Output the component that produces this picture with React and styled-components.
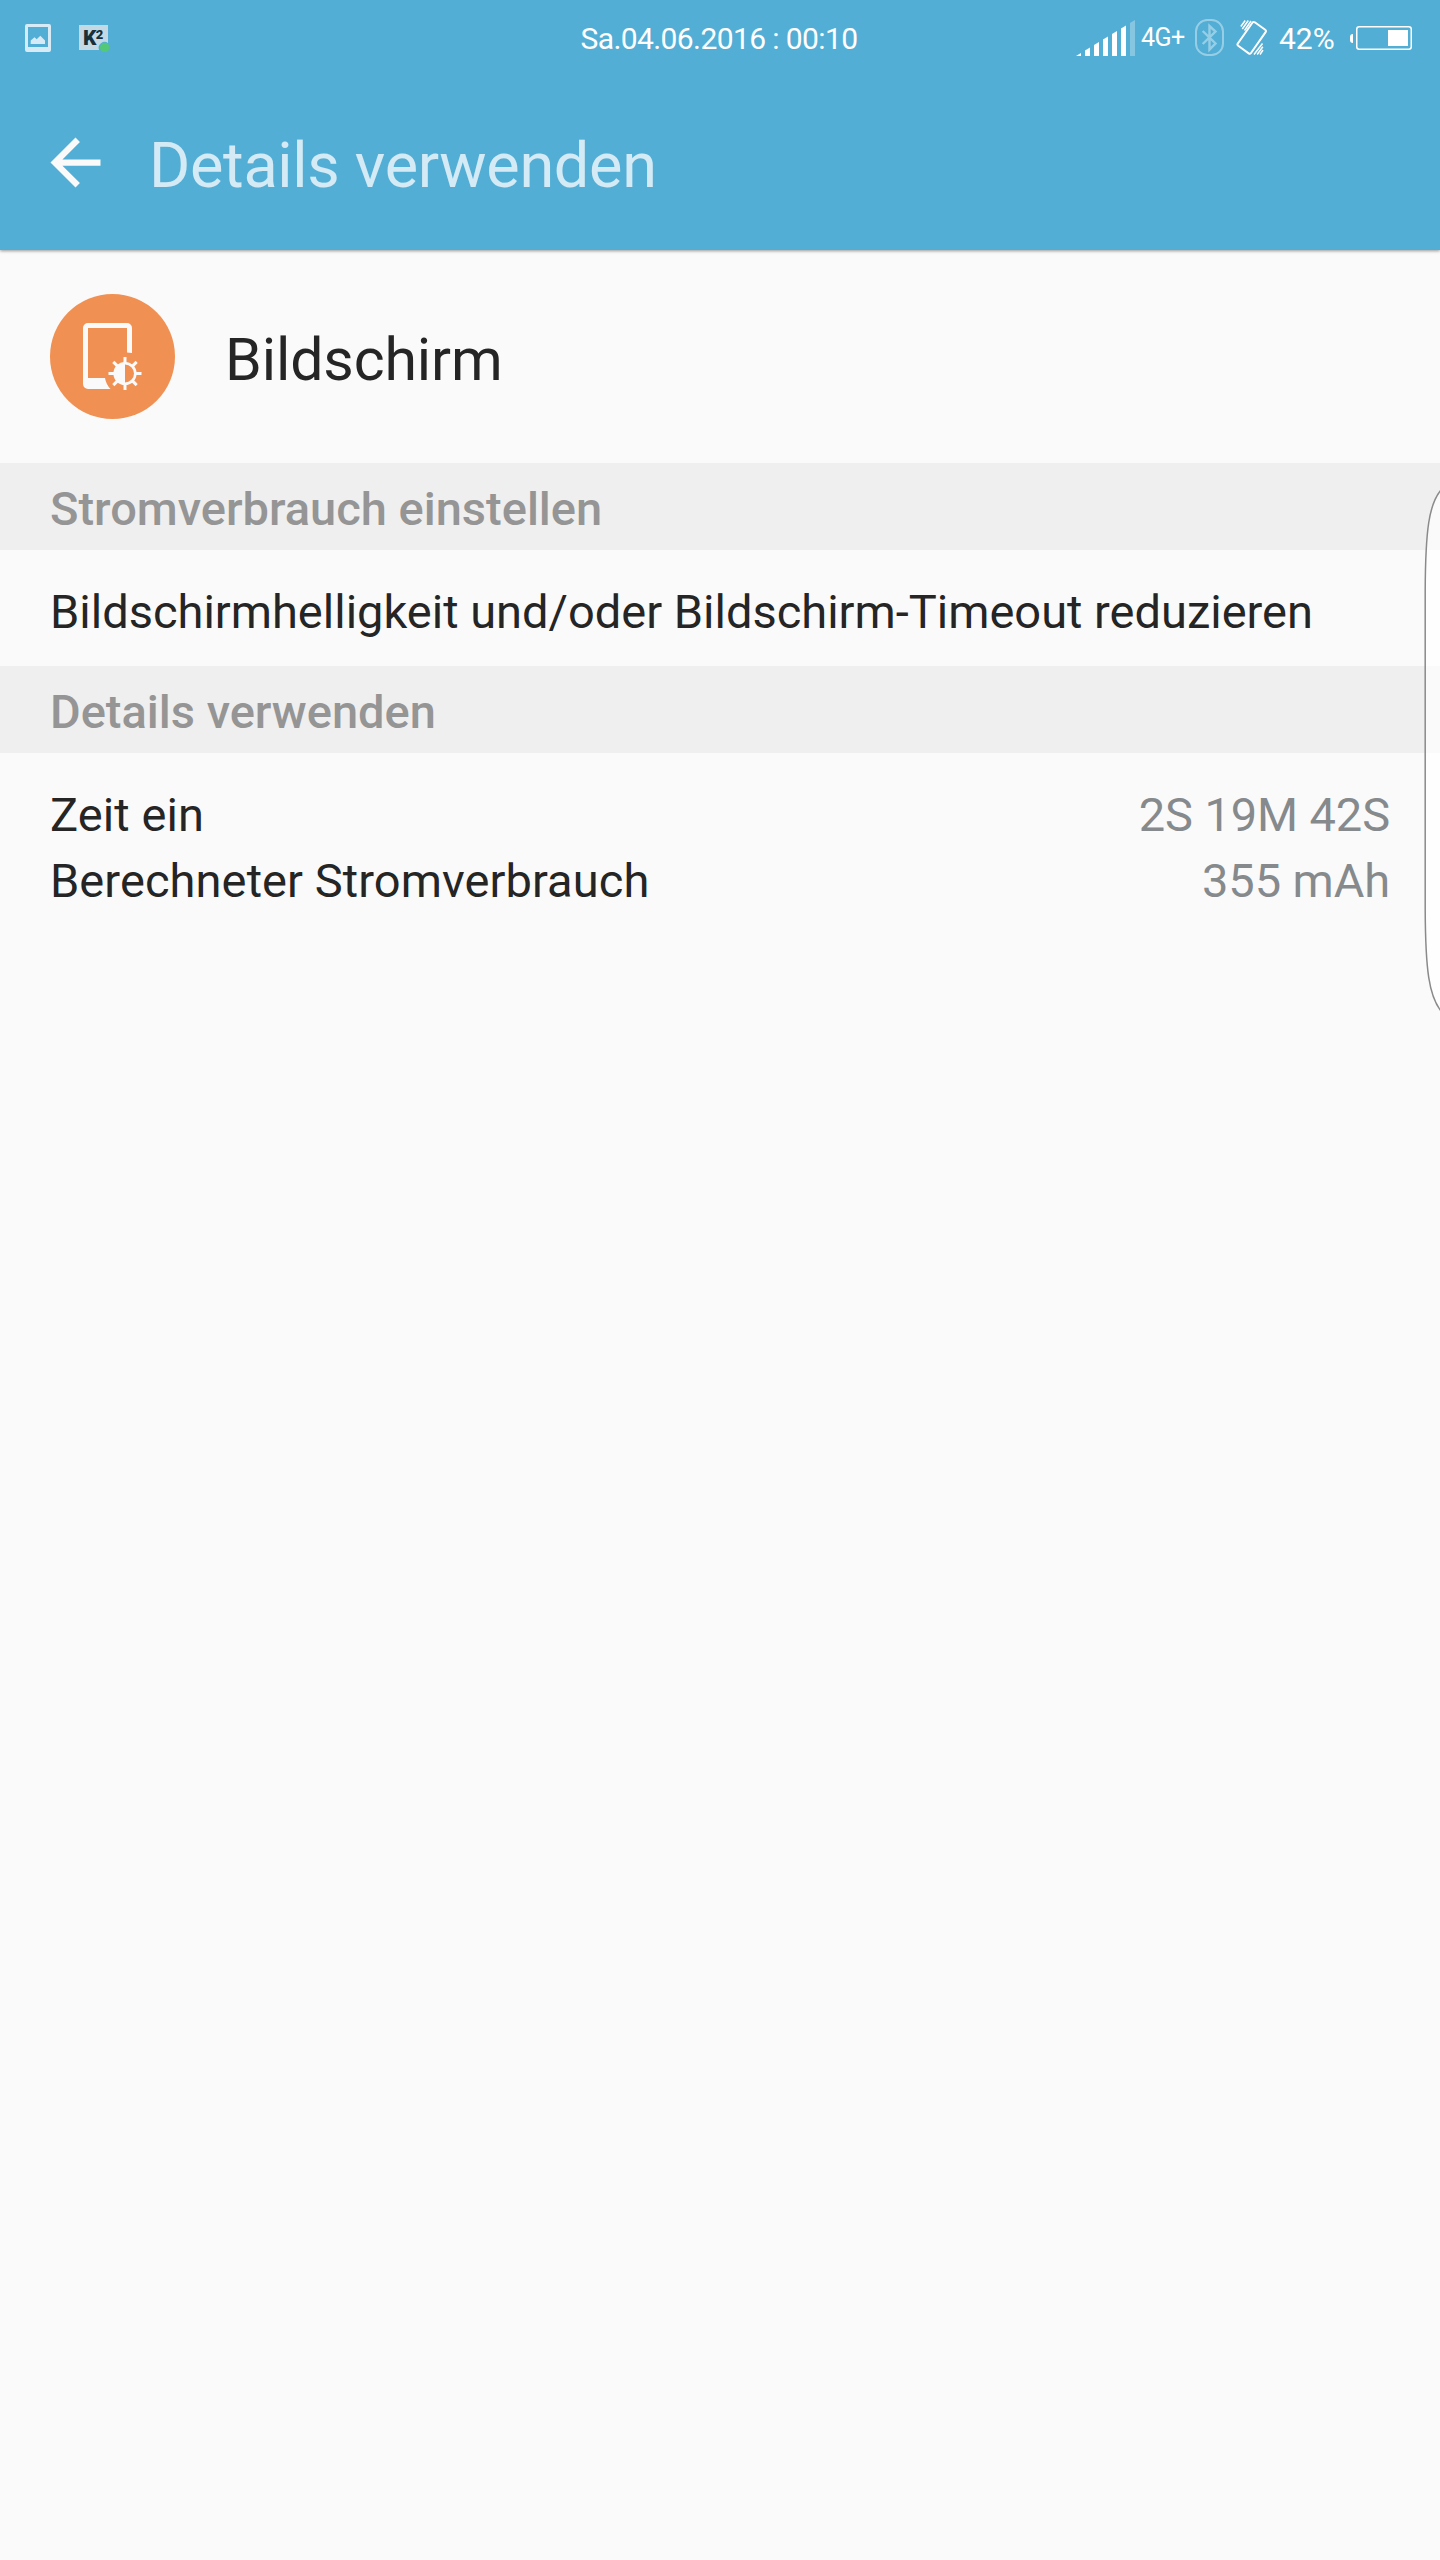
import React from "react";
import styled, { createGlobalStyle } from "styled-components";

const GlobalStyle = createGlobalStyle`
  body {
    margin: 0;
    background: #fafafa;
    font-family: Roboto, "Noto Sans", sans-serif;
  }
`;

// Styles
const Screen = styled.div`
  position: relative;
  width: 1440px;
  height: 2560px;
  overflow: hidden;
  background: #fafafa;
  color: #252525;
`;

const TopCon = styled.header`
  height: 250px;
  background: #53aed5;
  box-shadow: 0 1px 3px rgba(0, 0, 0, 0.4);
`;

const StatusBar = styled.div`
  display: grid;
  grid-template-columns: 1fr auto 1fr;
  align-items: center;
  height: 76px;
  padding: 0 28px 0 25px;
  color: #fff;
  font-size: 30px;
  line-height: 74px;
  white-space: nowrap;

  svg {
    display: block;
  }
`;

const StatusGroup = styled.div`
  display: flex;
  align-items: center;
  justify-content: ${({ $end }) => ($end ? "flex-end" : "flex-start")};
  gap: ${({ $gap }) => $gap || 0}px;
`;

const Clock = styled.span`
  padding: 2px 0 0 1px;
  letter-spacing: -0.6px;
`;

const Network = styled.span`
  width: 53px;
  margin-left: 6px;
  font-size: 25px;
  letter-spacing: -0.5px;
`;

const Percent = styled.span`
  width: 71px;
  margin-left: 11px;
  padding-top: 2px;
`;

const VibrateCon = styled.span`
  margin-left: 11px;
`;

const AppBar = styled.div`
  display: flex;
  align-items: center;
  height: 174px;
  padding-left: 38px;

  svg {
    margin-bottom: 1px;
  }

  h1 {
    margin: 0;
    padding: 5px 0 0 36px;
    font-size: 63px;
    font-weight: 400;
    letter-spacing: -0.32px;
    color: #d4eaf4;
  }
`;

const AppHeader = styled.div`
  display: flex;
  align-items: center;
  height: 213px;
  padding-left: 50px;

  h2 {
    margin: 0;
    padding: 5px 0 0 50px;
    font-size: 59px;
    font-weight: 400;
    letter-spacing: -0.1px;
  }
`;

const SectionTitle = styled.h3`
  height: 87px;
  margin: 0;
  padding: 2px 50px 0;
  box-sizing: border-box;
  background: #efefef;
  color: #959595;
  font-size: 47px;
  font-weight: 500;
  line-height: 87px;
`;

const Tip = styled.p`
  height: 116px;
  margin: 0;
  padding: 4px 50px 0;
  box-sizing: border-box;
  font-size: 47px;
  line-height: 116px;
  white-space: nowrap;
`;

const DetailList = styled.div`
  padding: 29px 50px 0;
`;

const DetailRow = styled.div`
  display: flex;
  justify-content: space-between;
  font-size: 47px;
  line-height: 66px;

  .label {
    letter-spacing: 0.08px;
  }

  .value {
    color: #868a8d;
    letter-spacing: -0.1px;
  }
`;

// Handle of the edge panel, lies over the right border of the screen
const EdgePanel = styled.svg`
  position: absolute;
  top: 480px;
  right: 0;
`;

const PictureIcon = () => (
  <svg width="26" height="28" viewBox="0 0 26 28">
    <path
      fill="#d6ebf5"
      fillRule="evenodd"
      d="M2 0h22a2 2 0 0 1 2 2v24a2 2 0 0 1-2 2H2a2 2 0 0 1-2-2V2a2 2 0 0 1 2-2zM3 3v20h20V3zM5.700 20v-3.500l3.800-3.200 2.200 2 3.600-3.500 4.700 4.700V20z"
    />
  </svg>
);

const K2Icon = () => (
  <svg width="31" height="28" viewBox="0 0 31 28">
    <path fill="#c3dae5" d="M0 1h29v18a6 6 0 0 0-9 7H0z" />
    <text x="4" y="21" fontSize="21" fontWeight="900" fill="#183039">K</text>
    <text x="16.700" y="14.500" fontSize="13" fontWeight="900" fill="#183039">2</text>
    <circle cx="25.700" cy="23.500" r="4.800" fill="#52c878" />
  </svg>
);

const SignalIcon = () => (
  <svg width="59" height="36" viewBox="0 0 59 36">
    {[0, 9, 18, 27, 36, 45, 54].map(x => (
      <path
        key={x}
        fill="#fff"
        opacity={x === 54 ? 0.3 : 1}
        d={`M${x} 36V${36 - x * 0.61}L${x + 5} ${36 - (x + 5) * 0.61}V36z`}
      />
    ))}
  </svg>
);

const BluetoothIcon = () => (
  <svg width="31" height="38" viewBox="0 0 31 38" fill="none" stroke="#fff" strokeWidth="2" opacity="0.4">
    <rect x="2" y="1" width="27" height="35" rx="11.500" />
    <path strokeWidth="2.400" d="M8.700 12l12.800 12.500-6 6V7l6 5.500L8.700 25" />
  </svg>
);

const VibrateIcon = () => (
  <svg width="32" height="36" viewBox="0 0 32 36" fill="none" stroke="#fff" strokeWidth="2">
    <path
      strokeLinejoin="round"
      d="M18.800 2.300l10.400 7.500q1.300 1 .4 2.300L15 33q-1 1.300-2.300.400L2.200 25.800q-1.300-1-.4-2.300L16.400 2.700q1-1.300 2.400-.4z"
    />
    <path strokeWidth="1.500" d="M4.800 6.500l4.400-6M6.300 9l6-8.500M8.500 10.500l6.500-9.500M26.500 23.500l-8.500 11M26.800 26.800l-5.600 7.700M27 30l-3 4.500" />
  </svg>
);

const BatteryIcon = () => (
  <svg width="62" height="24" viewBox="0 0 62 24">
    <path fill="#fff" d="M3 8v9a3 3 0 0 1-3-3v-3a3 3 0 0 1 3-3zM38 4h20v16H38z" />
    <rect x="6.750" y="0.750" width="54.500" height="22.500" rx="2.500" fill="none" stroke="#fff" strokeWidth="1.500" />
  </svg>
);

const BackIcon = () => (
  <svg width="75" height="75" viewBox="0 0 24 24" fill="#fafafa">
    <path d="M20 11H7.830l5.590-5.590L12 4l-8 8 8 8 1.410-1.410L7.830 13H20z" />
  </svg>
);

const DisplayIcon = () => (
  <svg width="125" height="125" viewBox="0 0 125 125">
    <circle cx="62.500" cy="62.500" r="62.500" fill="#f09052" />
    <path
      fill="#fafafa"
      d="M82 59V34a5 5 0 0 0-5-5H38a5 5 0 0 0-5 5v56a5 5 0 0 0 5 5h22.500a21 21 0 0 1-5.500-11H38V34h39v24.500q2.500 0 5 .500z"
    />
    <g transform="translate(75 79.500)" stroke="#fafafa" fill="none">
      <circle r="10.300" strokeWidth="2.600" />
      <path d="M0-10a10 10 0 0 0 0 20z" fill="#fafafa" stroke="none" />
      {[0, 45, 90, 135, 180, 225, 270, 315].map(a => (
        <path key={a} strokeWidth="3" d="M0-16.500v6" transform={`rotate(${a})`} />
      ))}
    </g>
  </svg>
);

const details = [
  { label: "Zeit ein", value: "2S 19M 42S" },
  { label: "Berechneter Stromverbrauch", value: "355 mAh" },
];

const App = () => {
  return (
    <Screen>
      <GlobalStyle />
      <TopCon>
        <StatusBar>
          <StatusGroup $gap={28}>
            <PictureIcon />
            <K2Icon />
          </StatusGroup>
          <Clock>Sa.04.06.2016 : 00:10</Clock>
          <StatusGroup $end>
            <SignalIcon />
            <Network>4G+</Network>
            <BluetoothIcon />
            <VibrateCon>
              <VibrateIcon />
            </VibrateCon>
            <Percent>42%</Percent>
            <BatteryIcon />
          </StatusGroup>
        </StatusBar>
        <AppBar>
          <BackIcon />
          <h1>Details verwenden</h1>
        </AppBar>
      </TopCon>

      <AppHeader>
        <DisplayIcon />
        <h2>Bildschirm</h2>
      </AppHeader>

      <SectionTitle>Stromverbrauch einstellen</SectionTitle>
      <Tip>Bildschirmhelligkeit und/oder Bildschirm-Timeout reduzieren</Tip>
      <SectionTitle>Details verwenden</SectionTitle>
      <DetailList>
        {details.map(item => (
          <DetailRow key={item.label}>
            <span className="label">{item.label}</span>
            <span className="value">{item.value}</span>
          </DetailRow>
        ))}
      </DetailList>

      <EdgePanel width="16" height="540" viewBox="0 0 16 540">
        <path
          fill="#fff"
          fillOpacity="0.7"
          stroke="#8a8a8a"
          strokeWidth="1.500"
          d="M17 10C5 24 1.500 50 1.200 110V430C1.500 490 5 516 17 531"
        />
      </EdgePanel>
    </Screen>
  );
};

export default App;
